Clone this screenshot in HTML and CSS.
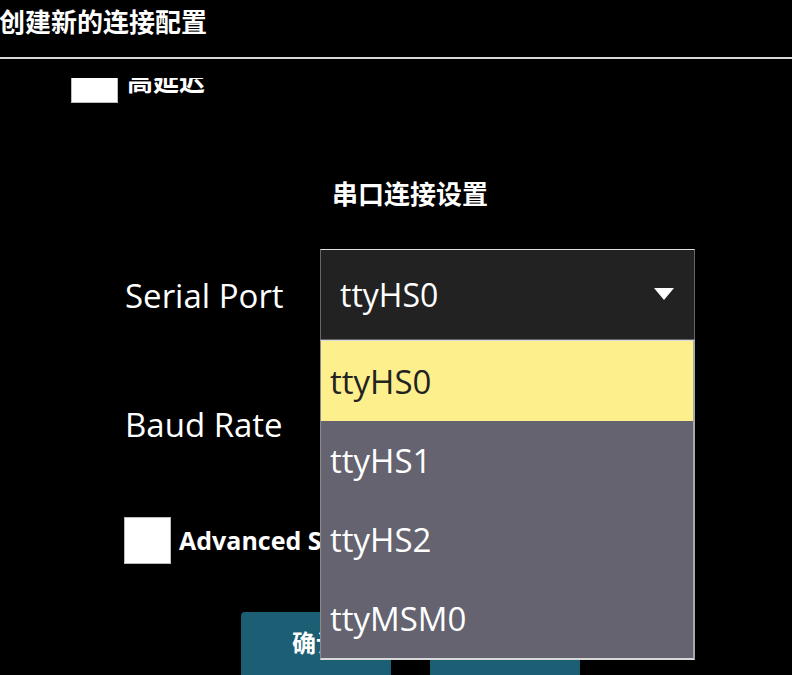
FILE: index.html
```html
<!DOCTYPE html>
<html lang="zh">
<head>
<meta charset="utf-8">
<title>创建新的连接配置</title>
<link rel="stylesheet" href="styles.css">
</head>
<body>
<div class="dialog">
  <header class="title-bar">
    <h1 class="title">创建新的连接配置</h1>
  </header>
  <div class="viewport">
    <div class="scroll">
      <div class="check-row latency">
        <span class="box"></span>
        <span class="check-label">高延迟</span>
      </div>
      <h2 class="section-title">串口连接设置</h2>
      <div class="form">
        <div class="form-row">
          <span class="field-label">Serial Port</span>
          <div class="select open">
            <span class="select-value">ttyHS0</span>
            <svg class="arrow" width="20" height="12" viewBox="0 0 20 12"><polygon points="0,0 20,0 10,12" fill="#fff"/></svg>
            <ul class="dropdown">
              <li class="option selected">ttyHS0</li>
              <li class="option">ttyHS1</li>
              <li class="option">ttyHS2</li>
              <li class="option">ttyMSM0</li>
            </ul>
          </div>
        </div>
        <div class="form-row">
          <span class="field-label">Baud Rate</span>
          <div class="select"></div>
        </div>
      </div>
      <div class="check-row advanced">
        <span class="box"></span>
        <span class="check-label bold">Advanced Settings</span>
      </div>
      <div class="buttons">
        <button class="btn">确认</button>
        <button class="btn">取消</button>
      </div>
    </div>
  </div>
</div>
</body>
</html>
```

FILE: styles.css
```css
html, body {
  margin: 0;
  padding: 0;
  background: #000;
  width: 792px;
  height: 675px;
  overflow: hidden;
  font-family: "Open Sans", "Noto Sans CJK SC", sans-serif;
  color: #fff;
}

.dialog {
  width: 792px;
  height: 675px;
  display: flex;
  flex-direction: column;
}

.title-bar {
  height: 57px;
  border-bottom: 2px solid #d8d8d8;
  box-sizing: content-box;
  flex: none;
}

.title {
  margin: 0;
  padding: 2px 0 0 0;
  margin-left: -1px;
  font-family: "Noto Sans CJK SC", sans-serif;
  font-size: 26px;
  font-weight: 700;
  line-height: 38px;
  color: #fff;
}

.viewport {
  margin-top: 19px;
  flex: 1;
  overflow: hidden;
}

.scroll {
  margin-top: -22px;
}

.check-row {
  display: flex;
  align-items: center;
}

.box {
  width: 47px;
  height: 47px;
  background: #fff;
  box-sizing: border-box;
  border: 1px solid #bbb;
  flex: none;
}

.latency {
  padding-left: 71px;
  gap: 9px;
}

.latency .check-label {
  font-family: "Noto Sans CJK SC", sans-serif;
  font-size: 26px;
  font-weight: 700;
  line-height: 47px;
}

.section-title {
  margin: 72px 0 0 0;
  text-align: center;
  padding-left: 28px;
  font-family: "Noto Sans CJK SC", sans-serif;
  font-size: 26px;
  font-weight: 700;
  line-height: 36px;
}

.form {
  margin-top: 38px;
  padding-left: 125px;
  display: flex;
  flex-direction: column;
  gap: 38px;
}

.form-row {
  display: flex;
  align-items: center;
}

.field-label {
  width: 195px;
  font-size: 33px;
  line-height: 44px;
  margin-top: 2px;
}

.select {
  position: relative;
  width: 375px;
  height: 91px;
  box-sizing: border-box;
  background: #222;
  border: 1px solid #666;
  border-top-color: #ddd;
  display: flex;
  align-items: center;
  padding-left: 19px;
  padding-right: 20px;
}

.select-value {
  flex: 1;
  font-size: 32px;
  line-height: 44px;
}

.arrow {
  flex: none;
  margin-top: -1px;
}

.dropdown {
  position: absolute;
  left: -1px;
  top: 90px;
  width: 375px;
  box-sizing: border-box;
  margin: 0;
  padding: 0;
  list-style: none;
  border-left: 1px solid #8a8a8a;
  border-right: 2px solid #a8a8a8;
  border-bottom: 2px solid #d8d8d8;
  border-top: 1px solid #d8d8d8;
  background: #64636f;
  z-index: 2;
}

.option {
  height: 79px;
  display: flex;
  align-items: center;
  padding-left: 9px;
  font-size: 33px;
  color: #fff;
}

.option.selected {
  height: 80px;
  background: #fdef8c;
  color: #222;
}

.advanced {
  margin-top: 48px;
  padding-left: 124px;
  gap: 8px;
}

.bold {
  font-weight: 700;
  font-size: 25px;
  line-height: 47px;
}

.buttons {
  margin-top: 48px;
  display: flex;
  gap: 39px;
  padding-left: 241px;
}

.btn {
  width: 150px;
  height: 80px;
  border: none;
  border-radius: 4px;
  background: #1c5e73;
  color: #fff;
  font-family: "Noto Sans CJK SC", sans-serif;
  font-size: 24px;
  font-weight: 700;
  padding: 12px 0 0 0;
  display: flex;
  justify-content: center;
  align-items: flex-start;
}
```
